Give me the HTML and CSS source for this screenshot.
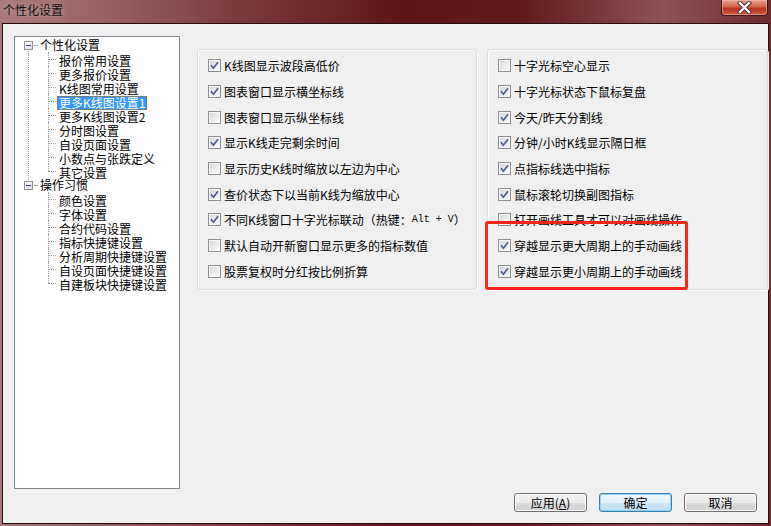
FILE: index.html
```html
<!DOCTYPE html>
<html lang="zh-CN">
<head>
    <meta charset="UTF-8">
    <title>个性化设置</title>
    <link rel="stylesheet" href="styles.css">
</head>
<body>
<div class="window">
    <div class="titlebar">
        <span class="title">个性化设置</span>
        <div class="close">
            <svg width="17" height="13" viewBox="0 0 17 13">
                <path d="M4 2 L13 11 M13 2 L4 11" stroke="#3a2a2a" stroke-width="4.2" stroke-linecap="square"/>
                <path d="M4 2 L13 11 M13 2 L4 11" stroke="#ffffff" stroke-width="2.4" stroke-linecap="square"/>
            </svg>
        </div>
    </div>

    <div class="client">
        <div class="top">
            <ul class="tree">
                <li class="root first">
                    <div class="row"><span class="expander"></span><span class="label">个性化设置</span></div>
                    <ul class="children">
                        <li class="leaf"><span class="label">报价常用设置</span></li>
                        <li class="leaf"><span class="label">更多报价设置</span></li>
                        <li class="leaf"><span class="label">K线图常用设置</span></li>
                        <li class="leaf"><span class="label selected">更多K线图设置1</span></li>
                        <li class="leaf"><span class="label">更多K线图设置2</span></li>
                        <li class="leaf"><span class="label">分时图设置</span></li>
                        <li class="leaf"><span class="label">自设页面设置</span></li>
                        <li class="leaf"><span class="label">小数点与张跌定义</span></li>
                        <li class="leaf"><span class="label">其它设置</span></li>
                    </ul>
                </li>
                <li class="root">
                    <div class="row"><span class="expander"></span><span class="label">操作习惯</span></div>
                    <ul class="children">
                        <li class="leaf"><span class="label">颜色设置</span></li>
                        <li class="leaf"><span class="label">字体设置</span></li>
                        <li class="leaf"><span class="label">合约代码设置</span></li>
                        <li class="leaf"><span class="label">指标快捷键设置</span></li>
                        <li class="leaf"><span class="label">分析周期快捷键设置</span></li>
                        <li class="leaf"><span class="label">自设页面快捷键设置</span></li>
                        <li class="leaf"><span class="label">自建板块快捷键设置</span></li>
                    </ul>
                </li>
            </ul>

            <div class="panels">
                <div class="group">
                    <div class="check"><span class="box on"><svg viewBox="0 0 11 11"><path d="M2 5.2 L4.4 8.2 L9 2.2"/></svg></span>K线图显示波段高低价</div>
                    <div class="check"><span class="box on"><svg viewBox="0 0 11 11"><path d="M2 5.2 L4.4 8.2 L9 2.2"/></svg></span>图表窗口显示横坐标线</div>
                    <div class="check"><span class="box"></span>图表窗口显示纵坐标线</div>
                    <div class="check"><span class="box on"><svg viewBox="0 0 11 11"><path d="M2 5.2 L4.4 8.2 L9 2.2"/></svg></span>显示K线走完剩余时间</div>
                    <div class="check"><span class="box"></span>显示历史K线时缩放以左边为中心</div>
                    <div class="check"><span class="box on"><svg viewBox="0 0 11 11"><path d="M2 5.2 L4.4 8.2 L9 2.2"/></svg></span>查价状态下以当前K线为缩放中心</div>
                    <div class="check"><span class="box on"><svg viewBox="0 0 11 11"><path d="M2 5.2 L4.4 8.2 L9 2.2"/></svg></span>不同K线窗口十字光标联动（热键：<span class="mono">Alt + V</span>）</div>
                    <div class="check"><span class="box"></span>默认自动开新窗口显示更多的指标数值</div>
                    <div class="check"><span class="box"></span>股票复权时分红按比例折算</div>
                </div>
                <div class="group">
                    <div class="check"><span class="box"></span>十字光标空心显示</div>
                    <div class="check"><span class="box on"><svg viewBox="0 0 11 11"><path d="M2 5.2 L4.4 8.2 L9 2.2"/></svg></span>十字光标状态下鼠标复盘</div>
                    <div class="check"><span class="box on"><svg viewBox="0 0 11 11"><path d="M2 5.2 L4.4 8.2 L9 2.2"/></svg></span>今天/昨天分割线</div>
                    <div class="check"><span class="box on"><svg viewBox="0 0 11 11"><path d="M2 5.2 L4.4 8.2 L9 2.2"/></svg></span>分钟/小时K线显示隔日框</div>
                    <div class="check"><span class="box on"><svg viewBox="0 0 11 11"><path d="M2 5.2 L4.4 8.2 L9 2.2"/></svg></span>点指标线选中指标</div>
                    <div class="check"><span class="box on"><svg viewBox="0 0 11 11"><path d="M2 5.2 L4.4 8.2 L9 2.2"/></svg></span>鼠标滚轮切换副图指标</div>
                    <div class="check"><span class="box"></span>打开画线工具才可以对画线操作</div>
                    <div class="check"><span class="box on"><svg viewBox="0 0 11 11"><path d="M2 5.2 L4.4 8.2 L9 2.2"/></svg></span>穿越显示更大周期上的手动画线</div>
                    <div class="check"><span class="box on"><svg viewBox="0 0 11 11"><path d="M2 5.2 L4.4 8.2 L9 2.2"/></svg></span>穿越显示更小周期上的手动画线</div>
                </div>
                <div class="mark"></div>
            </div>
        </div>

        <div class="buttons">
            <button class="btn">应用(<u>A</u>)</button>
            <button class="btn default">确定</button>
            <button class="btn">取消</button>
        </div>
    </div>
</div>
</body>
</html>
```

FILE: styles.css
```css
body {
    margin: 0;
    width: 771px;
    height: 526px;
    overflow: hidden;
    font-family: "Noto Sans CJK SC", "Liberation Sans", sans-serif;
    font-size: 12px;
    color: #000000;
}
.window {
    width: 771px;
    height: 526px;
    box-sizing: border-box;
    padding: 0 2px 2px 2px;
    display: flex;
    flex-direction: column;
    background: linear-gradient(90deg, #a87a7c 0%, #94605f 15%, #7a3838 32%, #5e1616 52%, #621b1b 68%, #8e5253 86%, #6e2c2c 100%);
}
.titlebar {
    height: 23px;
    display: flex;
    align-items: flex-start;
    flex-shrink: 0;
}
.title {
    padding: 3px 0 0 1px;
    line-height: 14px;
    color: #101010;
    text-shadow: 0 0 6px rgba(255, 230, 230, 0.6);
}
.close {
    margin-left: auto;
    margin-right: 1px;
    width: 45px;
    height: 15px;
    border: 1px solid #3c1414;
    border-top: none;
    border-radius: 0 0 4px 4px;
    background: linear-gradient(#e9a08e 0%, #d2634c 45%, #b8321c 55%, #cf5a3c 100%);
    box-shadow: inset 0 0 0 1px rgba(255, 200, 190, 0.5);
    display: flex;
    justify-content: center;
    align-items: center;
}
.close svg {
    display: block;
}
.client {
    flex: 1;
    border: 1px solid #2a0c0c;
    background-color: #f0f0f0;
    display: flex;
    flex-direction: column;
}
.top {
    display: flex;
    align-items: flex-start;
    padding: 12px 0 0 11px;
}

/* tree */
.tree {
    list-style: none;
    margin: 0;
    padding: 1px 0 0 0;
    width: 164px;
    height: 450px;
    border: 1px solid #828790;
    background-color: #ffffff;
    flex-shrink: 0;
}
.tree ul {
    list-style: none;
    margin: 0;
    padding: 0;
}
.root {
    position: relative;
}
.root.first::after {
    content: "";
    position: absolute;
    left: 13px;
    top: 13px;
    bottom: -4px;
    border-left: 1px dotted #a0a0a0;
}
.row {
    height: 14px;
    display: flex;
    align-items: center;
    position: relative;
}
.expander {
    width: 7px;
    height: 7px;
    margin-left: 9px;
    border: 1px solid #919191;
    background: linear-gradient(135deg, #ffffff, #dcdcdc);
    position: relative;
    flex-shrink: 0;
}
.expander::after {
    content: "";
    position: absolute;
    left: 1px;
    top: 3px;
    width: 5px;
    height: 1px;
    background-color: #22409a;
}
.row .expander + .label {
    margin-left: 5px;
    position: relative;
}
.row .label::before {
    content: "";
    position: absolute;
    left: -4px;
    top: 7px;
    width: 4px;
    border-top: 1px dotted #a0a0a0;
}
.label {
    display: inline-block;
    height: 14px;
    line-height: 14px;
    padding: 0 2px;
    white-space: nowrap;
    box-sizing: border-box;
}
.label.selected {
    background-color: #3399ff;
    color: #ffffff;
    outline: 1px dotted #b06a00;
    outline-offset: -1px;
}
.children {
    padding-left: 42px !important;
}
.leaf {
    height: 14px;
    position: relative;
}
.leaf::before {
    content: "";
    position: absolute;
    left: -9px;
    top: 7px;
    width: 8px;
    border-top: 1px dotted #a0a0a0;
}
.leaf::after {
    content: "";
    position: absolute;
    left: -9px;
    top: 0;
    height: 14px;
    border-left: 1px dotted #a0a0a0;
}
.leaf:last-child::after {
    height: 7px;
}

/* option groups */
.panels {
    display: flex;
    align-items: flex-start;
    gap: 10px;
    height: 241px;
    margin: 13px 0 0 17px;
    position: relative;
}
.group {
    width: 268px;
    height: 236px;
    border: 1px solid #d5dfe5;
    border-radius: 3px;
    box-shadow: inset 1px 1px 0 #ffffff, 1px 1px 0 #ffffff;
    padding: 3px 0 0 10px;
    display: flex;
    flex-direction: column;
}
.group + .group {
    width: 269px;
}
.check {
    height: 25.67px;
    flex-shrink: 0;
    display: flex;
    align-items: center;
    white-space: nowrap;
}
.mono {
    font-family: "Liberation Mono", monospace;
    font-size: 10px;
}
.box {
    width: 11px;
    height: 11px;
    border: 1px solid #8e8f8f;
    background: linear-gradient(135deg, #d2d2d2 0%, #ebebeb 50%, #fbfbfb 100%);
    box-shadow: inset 0 0 0 1px #f6f6f6;
    margin-right: 3px;
    flex-shrink: 0;
    display: flex;
}
.box svg {
    width: 11px;
    height: 11px;
}
.box svg path {
    fill: none;
    stroke: #4a5c94;
    stroke-width: 1.7;
}
.mark {
    position: absolute;
    left: 288px;
    top: 172px;
    width: 197px;
    height: 63px;
    border: 3px solid #ff2418;
    border-radius: 3px;
}

/* buttons */
.buttons {
    display: flex;
    justify-content: flex-end;
    gap: 12px;
    margin-top: 4px;
    padding-right: 11px;
}
.btn {
    width: 73px;
    height: 19px;
    padding: 0;
    font-family: "Noto Sans CJK SC", "Liberation Sans", sans-serif;
    font-size: 12px;
    color: #000000;
    border: 1px solid #707070;
    border-radius: 3px;
    background: linear-gradient(#f2f2f2 0%, #ebebeb 50%, #dddddd 51%, #cfcfcf 100%);
    box-shadow: inset 0 0 0 1px #fbfbfb;
    line-height: 16px;
}
.btn.default {
    border-color: #3c7fb1;
    background: linear-gradient(#eef7fd 0%, #e3f1fb 50%, #cfe7f7 51%, #bfdff3 100%);
    box-shadow: inset 0 0 0 1px #8fd3f5;
}
.btn u {
    text-decoration: underline;
}
```
